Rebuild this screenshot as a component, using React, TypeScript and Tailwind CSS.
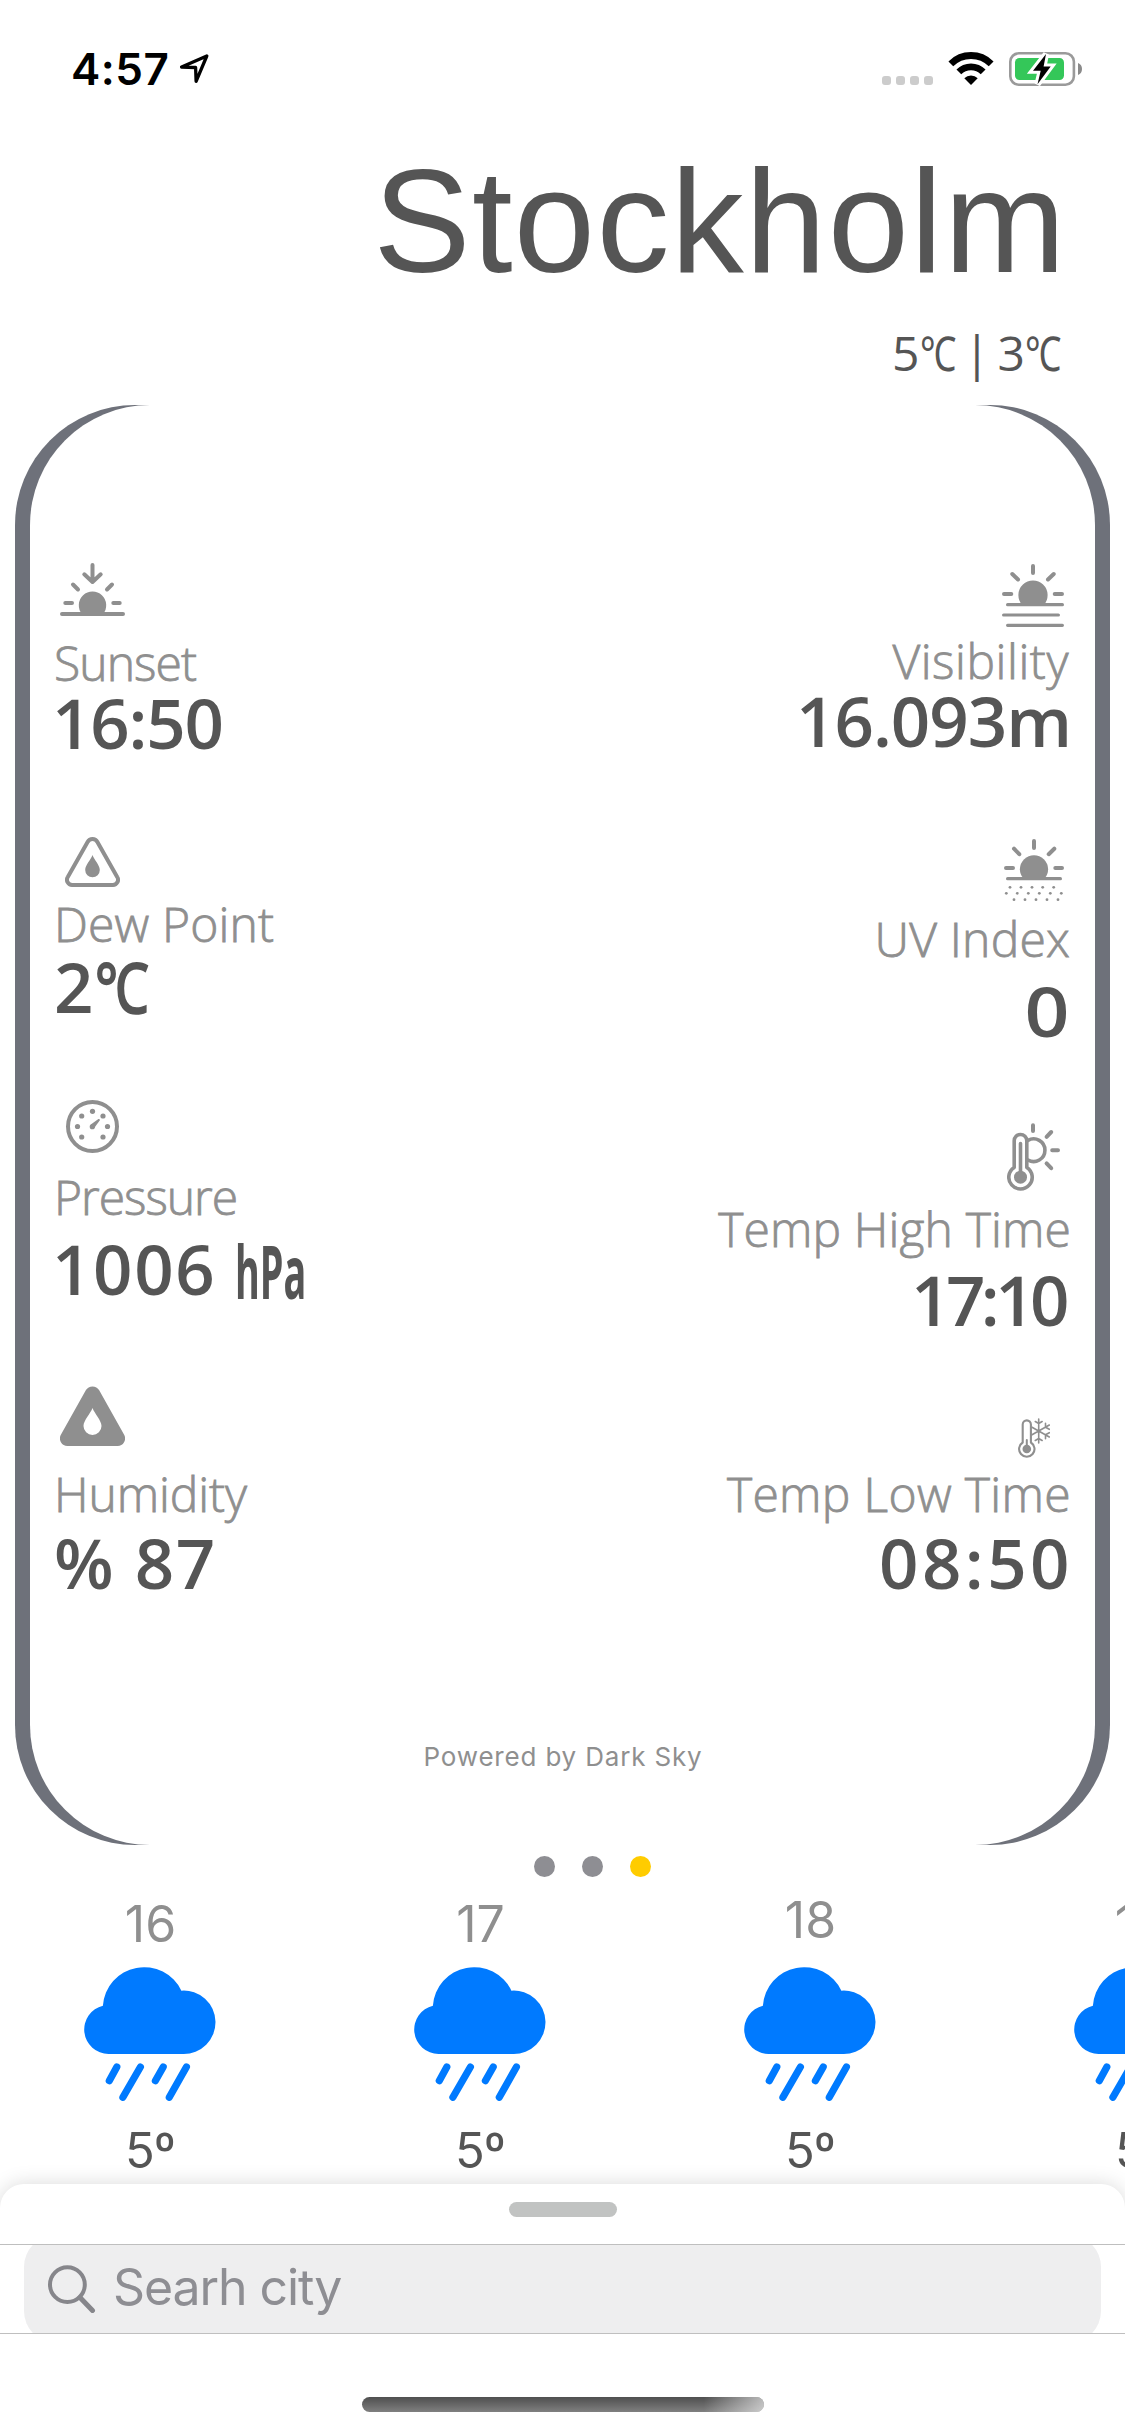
import type { ReactNode } from 'react';

const GREY = '#8f8f8f';

function Ray({ d, w = 4 }: { d: string; w?: number }) {
  return <path d={d} fill="none" stroke={GREY} strokeWidth={w} strokeLinecap="round" strokeLinejoin="round" />;
}

function SunsetIcon() {
  return (
    <svg width="65" height="53" viewBox="0 0 65 53">
      <path d="M22 51a13.7 13.7 0 1 1 21 0z" fill={GREY} />
      <Ray d="M2 51H63M5.3 40H12M53.3 40H59.7M13 21.5l5 5M52 21.5l-5 5M32.5 2V18M24.3 11.3l8.2 7.7 8.2-7.7" />
    </svg>
  );
}

function VisibilityIcon() {
  return (
    <svg width="62" height="63" viewBox="0 0 62 63">
      <path d="M20 40.7a14.6 14.6 0 1 1 22 0z" fill={GREY} />
      <Ray d="M31 2v7M10.3 10l5.7 5.5M51.7 10L46 15.5M2 30h7.3M52.7 30H60" />
      <Ray w={3.2} d="M5.6 40.7H60.4M1.6 51H56.4M5.6 61.3H60.4" />
    </svg>
  );
}

const dots: [number, number][] = [
  [6, 48.3], [17, 48.3], [28, 48.3], [38.7, 48.3], [49.7, 48.3],
  [2.3, 54.3], [13.3, 54.3], [24.3, 54.3], [35.3, 54.3], [46.3, 54.3], [57.3, 54.3],
  [10, 60.7], [21, 60.7], [32, 60.7], [43, 60.7], [54, 60.7],
];

function UvIcon() {
  return (
    <svg width="60" height="63" viewBox="0 0 60 63">
      <path d="M19.5 39.7a14.1 14.1 0 1 1 21 0z" fill={GREY} />
      <Ray d="M30 2v7M10 9.7l5.3 5.5M50.3 9.7l-5.6 5.5M2 29h7M51.3 29H58" />
      <Ray w={3.2} d="M3.6 39.7H56.4" />
      {dots.map(([x, y]) => <circle key={`${x}-${y}`} cx={x} cy={y} r="1.4" fill={GREY} />)}
    </svg>
  );
}

function DewIcon() {
  return (
    <svg width="55" height="50" viewBox="0 0 55 50">
      <Ray d="M22.6 5a5.6 5.6 0 0 1 9.8 0L52.2 40a5.2 5.2 0 0 1-4.5 8H7.3a5.2 5.2 0 0 1-4.5-8z" />
      <path d="M27.5 18C29 22.5 34.8 28 34.8 33a7.3 7.3 0 0 1-14.6 0C20.2 28 26 22.5 27.5 18z" fill={GREY} />
    </svg>
  );
}

function PressureIcon() {
  return (
    <svg width="53" height="53" viewBox="0 0 53 53">
      <circle cx="26.5" cy="26.5" r="24.5" fill="none" stroke={GREY} strokeWidth="4" />
      {[[26.5, 11.3], [15.7, 16], [37, 16], [11.5, 26.5], [41.5, 26.5], [15.7, 37], [37, 37], [26.3, 26.7]].map(([x, y]) => (
        <circle key={`${x}-${y}`} cx={x} cy={y} r="2.6" fill={GREY} />
      ))}
      <path d="M24.8 24.6L32.4 19a1 1 0 0 1 1.3 1.4L28.2 28z" fill={GREY} />
    </svg>
  );
}

function HumidityIcon() {
  return (
    <svg width="65" height="60" viewBox="0 0 65 60">
      <path d="M25.8 4.2a7.8 7.8 0 0 1 13.4 0L64 48.5A7.6 7.6 0 0 1 57.4 60H7.6A7.6 7.6 0 0 1 1 48.5z" fill={GREY} />
      <path d="M32.5 22C34.5 27.5 41.5 34.5 41.5 40a9 9 0 0 1-18 0C23.5 34.5 30.5 27.5 32.5 22z" fill="#fff" />
    </svg>
  );
}

function TempHighIcon() {
  return (
    <svg width="53" height="68" viewBox="0 0 53 68">
      <Ray w={3.6} d="M7.2 17.8a6.3 6.3 0 0 1 12.6 0V44.4a11.7 11.7 0 1 1-12.6 0z" />
      <Ray w={3.6} d="M13.5 20.5V52M21 17.4A11.3 11.3 0 1 1 21 37" />
      <circle cx="13.5" cy="54.2" r="6.5" fill={GREY} />
      <Ray d="M26 2.2V8M44.2 9l-4.6 4.8M45.2 27.2H51M39.6 40.4l4.6 4.8" />
    </svg>
  );
}

function TempLowIcon() {
  return (
    <svg width="32" height="40" viewBox="0 0 32 40">
      <Ray w={2.1} d="M4.7 6.5a4.1 4.1 0 0 1 8.2 0V24.5a7.7 7.7 0 1 1-8.2 0z" />
      <Ray w={2} d="M8.8 22V30" />
      <circle cx="8.8" cy="31" r="4.3" fill={GREY} />
      <Ray w={1.6} d="M20.7 1V25M14 9.2L31.3 19M14 16.8L31.3 7M17.3 3.5l3.4 2 3.4-2M17.3 22.5l3.4-2 3.4 2M31.3 11.3l-3.8-2V5.2M31.3 14.7l-3.8 2V20.8" />
    </svg>
  );
}

function RainCloud() {
  return (
    <svg className="overflow-visible" width="132" height="134" viewBox="0 0 132 134" fill="#007aff">
      <path d="M24.5 87A24.5 24.5 0 0 1 18.9 38.7A41.3 41.3 0 0 1 97.4 23.7A31.7 31.7 0 1 1 99 87z" />
      <path d="M32.8 100L25.3 113.7M56.4 100L38.9 130.3M79.2 100L71.4 113.7M102.4 100L85.3 130.3" stroke="#007aff" strokeWidth="7.2" strokeLinecap="round" />
    </svg>
  );
}

function StatusBar() {
  return (
    <div className="flex h-[143px] items-start pl-[71px] pr-[42px] pt-[42px]">
      <span className="font-['Inter',sans-serif] text-[44px] font-semibold leading-[54px] tracking-[0.5px] text-black">4:57</span>
      <svg className="ml-[10px] mt-[11px]" width="31" height="32" viewBox="0 0 31 32">
        <path d="M27.8 3L2.6 14l14 .5.5 13.8z" fill="none" stroke="#000" strokeWidth="3.3" strokeLinejoin="round" />
      </svg>
      <div className="ml-auto mt-[34px] flex gap-[5px]">
        {[0, 1, 2, 3].map((i) => <span key={i} className="h-[9px] w-[9px] rounded-[3px] bg-[#cccccc]" />)}
      </div>
      <svg className="ml-[15px] mt-[10px]" width="46" height="34" viewBox="0 0 46 34">
        <path d="M2.85 11.85A28.5 28.5 0 0 1 43.15 11.85M10.85 19.85A17.2 17.2 0 0 1 35.15 19.85" fill="none" stroke="#000" strokeWidth="6.8" />
        <path d="M23 33L16.3 26.3A9.5 9.5 0 0 1 29.7 26.3z" />
      </svg>
      <svg className="ml-[15px] mt-[10px]" width="74" height="34" viewBox="0 0 74 34">
        <rect x="1.3" y="1.3" width="63.6" height="31.4" rx="8.5" fill="none" stroke="#9a9a9a" strokeWidth="2.6" />
        <path d="M69 11a6.5 6.5 0 0 1 0 12z" fill="#8a8a8a" />
        <rect x="6" y="6" width="49" height="22" rx="4.5" fill="#34c759" />
        <path d="M37 2L24 18.7H31.7L28.5 32.3L41.7 14.5H34.6z" fill="#fff" stroke="#fff" strokeWidth="6" />
        <path d="M37 2L24 18.7H31.7L28.5 32.3L41.7 14.5H34.6z" fill="#000" />
      </svg>
    </div>
  );
}

function Stat({ icon, iconBox, label, labelBox, value, valueBox }: {
  icon: ReactNode; iconBox: string; label: string; labelBox: string; value: ReactNode; valueBox: string;
}) {
  return (
    <>
      <div className={iconBox}>{icon}</div>
      <div className={`whitespace-nowrap text-[48px] font-light leading-[49px] text-[#8f8f8f] [-webkit-text-stroke:0.8px_#8f8f8f] ${labelBox}`}>{label}</div>
      <div className={`flex whitespace-nowrap text-[69px] font-semibold leading-[60px] text-[#555555] ${valueBox}`}>{value}</div>
    </>
  );
}

function Details() {
  return (
    <section className="mx-[15px] h-[1440px] rounded-[120px] bg-[#6e717a] px-[15px]">
      <div className="flex h-full flex-col items-center rounded-[120px] bg-white">
        <div className="flex w-full justify-between pl-[24px] pr-[25px] font-['Open_Sans',sans-serif]">
          <div className="flex flex-col items-start">
            <Stat icon={<SunsetIcon />} iconBox="ml-[6px] mt-[158px] h-[53px]" label="Sunset" labelBox="mt-[22px] tracking-[-0.92px]" value="16:50" valueBox="-ml-[2px] mt-[5px] tracking-[-1.16px]" />
            <Stat icon={<DewIcon />} iconBox="ml-[11px] mt-[85px] h-[50px]" label="Dew Point" labelBox="mt-[12px] tracking-[0.15px]"
              value={<><span>2</span><span className="ml-[2px] inline-block origin-left scale-x-[0.78]">℃</span></>} valueBox="mt-[8px]" />
            <Stat icon={<PressureIcon />} iconBox="ml-[12px] mt-[84px] h-[53px]" label="Pressure" labelBox="mt-[19px] tracking-[-1.02px]"
              value={<><span className="tracking-[1.65px]">1006</span><span className="ml-[19px] inline-block w-[66px] origin-left translate-y-[3px] scale-x-[0.51] text-[74px] font-bold">hPa</span></>} valueBox="-ml-[2px] mt-[17px]" />
            <Stat icon={<HumidityIcon />} iconBox="ml-[6px] mt-[88px] h-[60px]" label="Humidity" labelBox="mt-[23px] tracking-[-0.1px]" value="% 87" valueBox="mt-[14px] tracking-[1.57px]" />
          </div>
          <div className="flex flex-col items-end">
            <Stat icon={<VisibilityIcon />} iconBox="mr-[6px] mt-[159px] h-[63px]" label="Visibility" labelBox="mr-[1px] mt-[9px] tracking-[0.56px]" value="16.093m" valueBox="-mr-[1px] mt-[5px] tracking-[-1px]" />
            <Stat icon={<UvIcon />} iconBox="mr-[6px] mt-[89px] h-[63px]" label="UV Index" labelBox="mt-[12px] tracking-[0.18px]" value={<span className="inline-block origin-right scale-x-[1.14]">0</span>} valueBox="mr-[1px] mt-[17px]" />
            <Stat icon={<TempHighIcon />} iconBox="mr-[10px] mt-[83px] h-[68px]" label="Temp High Time" labelBox="-mr-[1px] mt-[13px] tracking-[0.14px]" value="17:10" valueBox="mr-[5px] mt-[16px] tracking-[-4.56px]" />
            <Stat icon={<TempLowIcon />} iconBox="mr-[20px] mt-[89px] h-[40px]" label="Temp Low Time" labelBox="-mr-[1px] mt-[11px] tracking-[0.34px]" value="08:50" valueBox="-mr-[3px] mt-[14px] tracking-[3.44px]" />
          </div>
        </div>
        <p className="mt-[149px] pl-[1px] font-['Inter',sans-serif] text-[26px] leading-[31px] tracking-[0.82px] text-[#8f8f8f]">Powered by Dark Sky</p>
      </div>
    </section>
  );
}

const hours = [
  { hour: '16', box: 'mt-[17px] mb-[13px]' },
  { hour: '17', box: 'mt-[17px] mb-[13px]' },
  { hour: '18', box: 'mt-[13px] mb-[17px]' },
  { hour: '19', box: 'mt-[17px] mb-[13px]' },
];

export default function App() {
  return (
    <div className="flex h-[2436px] w-[1125px] flex-col overflow-hidden bg-white">
      <StatusBar />
      <h1 className="pr-[58px] text-right font-['Liberation_Sans',Arial,sans-serif] text-[146px] leading-[157px] tracking-[1.36px] text-[#555555]">Stockholm</h1>
      <div className="mb-[20px] mt-[20px] flex justify-end pr-[63px] font-['Open_Sans',sans-serif] text-[48px] leading-[65px] text-[#555555]">
        <span>5</span>
        <span className="inline-block w-[37px] origin-left scale-x-[0.76]">℃</span>
        <span className="w-[41px] text-center">|</span>
        <span>3</span>
        <span className="inline-block w-[37px] origin-left scale-x-[0.76]">℃</span>
      </div>

      <Details />

      <div className="mt-[11px] flex justify-center gap-[27px] pl-[60px]">
        <span className="h-[21px] w-[21px] rounded-full bg-[#8e8e93]" />
        <span className="h-[21px] w-[21px] rounded-full bg-[#8e8e93]" />
        <span className="h-[21px] w-[21px] rounded-full bg-[#ffcc00]" />
      </div>

      <div className="-ml-[15px] flex font-['Inter',sans-serif] text-[50px] leading-[60px]">
        {hours.map(({ hour, box }) => (
          <div key={hour} className="flex w-[330px] shrink-0 flex-col items-center">
            <span className={`pl-[1px] text-[#8f8f8f] ${box}`}>{hour}</span>
            <RainCloud />
            <span className="mt-[21px] text-[49px] leading-[58px] tracking-[-0.8px] text-[#555555]">5º</span>
          </div>
        ))}
      </div>

      <div className="relative mt-[4px] flex grow flex-col items-center rounded-t-[24px] bg-white shadow-[0_0_20px_rgba(0,0,0,0.15)]">
        <div className="mt-[18px] h-[15px] w-[108px] rounded-full bg-[#c1c3c2]" />
        <div className="mt-[27px] flex h-[90px] w-full items-center overflow-hidden border-y border-[#bfbfbf] px-[24px]">
          <div className="flex h-[108px] w-full shrink-0 items-center rounded-[32px] bg-[#eeeeef] pl-[24px]">
            <svg width="48" height="48" viewBox="0 0 48 48" fill="none" stroke="#86868b" strokeLinecap="round">
              <circle cx="19.4" cy="19.6" r="17.4" strokeWidth="4" />
              <path d="M32 32.5L44.5 45.5" strokeWidth="5" />
            </svg>
            <span className="mb-[4px] ml-[17px] font-['Inter',sans-serif] text-[50px] leading-[60px] tracking-[-1.1px] text-[#8e8e93]">Searh city</span>
          </div>
        </div>
        <div className="mt-[63px] h-[15px] w-[402px] overflow-hidden rounded-full bg-linear-to-b from-[#4f4f4f] to-[#808080]">
          <div className="h-full w-full bg-linear-to-r from-transparent from-85% to-white/60" />
        </div>
      </div>
    </div>
  );
}
